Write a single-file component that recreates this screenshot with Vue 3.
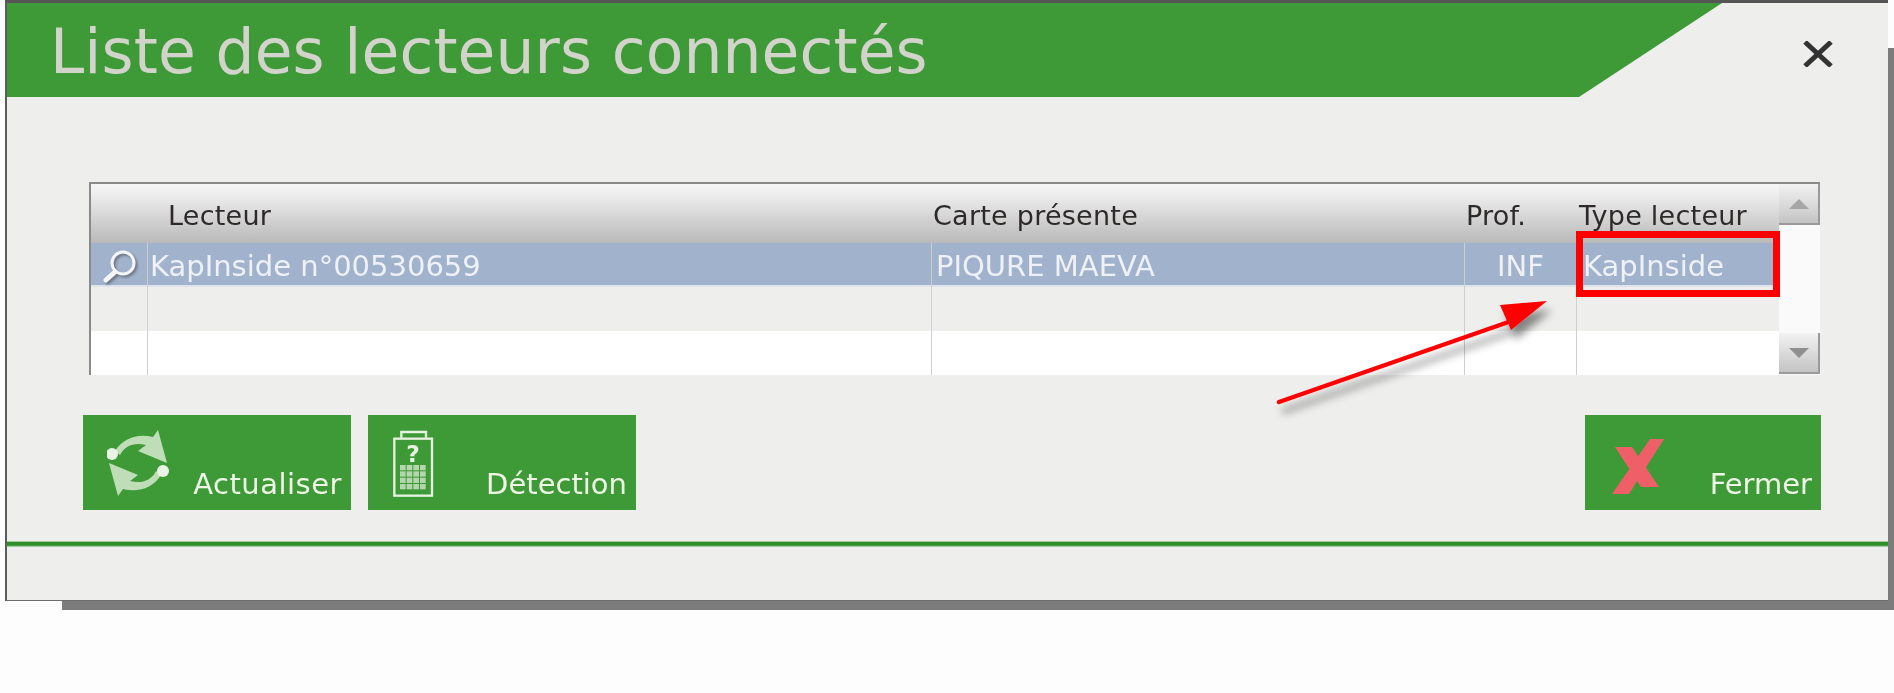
<script setup>
const columns = ['', 'Lecteur', 'Carte présente', 'Prof.', 'Type lecteur']
const rows = [
  { lecteur: 'KapInside n°00530659', carte: 'PIQURE MAEVA', prof: 'INF', type: 'KapInside', selected: true },
  { lecteur: '', carte: '', prof: '', type: '' },
  { lecteur: '', carte: '', prof: '', type: '', white: true }
]
const keypad = []
for (let r = 0; r < 4; r++) {
  for (let c = 0; c < 4; c++) keypad.push({ x: 148 + c * 20, y: 190 + r * 19 })
}
</script>

<template>
  <div class="page">
    <div class="shadow"></div>
    <div class="window">
      <div class="top">
        <div class="titlebar">
          <h1>Liste des lecteurs connectés</h1>
        </div>
        <svg class="close" width="32" height="26" viewBox="0 0 32 26">
          <path d="M3 1 L29 25 M29 1 L3 25" stroke="#333" stroke-width="5" fill="none" />
        </svg>
      </div>

      <div class="body">
        <div class="table">
          <div class="grid">
            <div class="head">
              <div v-for="col in columns" :key="col" class="hcell">{{ col }}</div>
            </div>
            <div v-for="(row, i) in rows" :key="i" class="row" :class="{ selected: row.selected, white: row.white }">
              <div class="cell">
                <svg v-if="row.selected" class="loupe" width="40" height="34" viewBox="0 0 40 34">
                  <circle cx="22" cy="14" r="11" fill="none" stroke="#f4f6fa" stroke-width="3" />
                  <path d="M14 23 L5 31" stroke="#f4f6fa" stroke-width="5" stroke-linecap="round" />
                </svg>
              </div>
              <div class="cell">{{ row.lecteur }}</div>
              <div class="cell">{{ row.carte }}</div>
              <div class="cell">{{ row.prof }}</div>
              <div class="cell">{{ row.type }}</div>
            </div>
          </div>
          <div class="scrollbar">
            <div class="sbtn up"><span></span></div>
            <div class="sbtn down"><span></span></div>
          </div>
        </div>

        <div class="actions">
          <button class="btn wide">
            <svg width="66" height="68" viewBox="107 429 66 68">
              <g fill="#bfdeb8">
                <path d="M115 450 C123 437 138 432 153 436 L158 429 L167 462 L138 450 L146 444 C135 441 125 444 120 454 Z" />
                <path d="M115 450 C123 437 138 432 153 436 L158 429 L167 462 L138 450 L146 444 C135 441 125 444 120 454 Z" transform="rotate(180 138 462)" />
              </g>
              <circle cx="112" cy="453" r="6" fill="#eaf4e6" />
              <circle cx="163" cy="470" r="6" fill="#eaf4e6" />
            </svg>
            <span class="spaced">Actualiser</span>
          </button>
          <button class="btn wide">
            <svg width="66" height="68" viewBox="124 85 198 204">
              <rect x="131" y="111" width="113" height="171" fill="none" stroke="#e6f2e2" stroke-width="7" />
              <path d="M152 108 V91 H226 V108" fill="none" stroke="#e6f2e2" stroke-width="7" />
              <text x="187" y="182" text-anchor="middle" class="qmark">?</text>
              <rect v-for="(k, i) in keypad" :key="i" :x="k.x" :y="k.y" width="17" height="16" fill="#b4d6ac" />
            </svg>
            <span>Détection</span>
          </button>
          <button class="btn fermer">
            <svg width="66" height="68" viewBox="1609 429 66 68">
              <polygon fill="#ef5f68" points="1650,438 1664,438 1629,493 1612,493" />
              <polygon fill="#ef5f68" points="1615,446 1632,446 1659,486 1641,486" />
            </svg>
            <span>Fermer</span>
          </button>
        </div>
      </div>

      <div class="line"></div>
      <div class="footer"></div>
    </div>

    <!-- annotations ajoutées sur la capture -->
    <div class="redbox"></div>
    <svg class="arrow" width="1894" height="693" viewBox="0 0 1894 693">
      <defs>
        <filter id="ds" x="-20%" y="-20%" width="150%" height="160%">
          <feDropShadow dx="5" dy="9" stdDeviation="4" flood-color="#000" flood-opacity="0.45" />
        </filter>
      </defs>
      <g filter="url(#ds)">
        <path d="M1279 402 L1520 318" stroke="#f00" stroke-width="4.5" stroke-linecap="round" />
        <polygon fill="#f00" points="1547,301 1500,305 1511,330" />
      </g>
    </svg>
  </div>
</template>

<style scoped>
.page {
  position: relative;
  width: 1894px;
  height: 693px;
  overflow: hidden;
  background: #fdfdfd;
  font-family: "DejaVu Sans", sans-serif;
}
.window {
  position: relative;
  box-sizing: border-box;
  margin-left: 5px;
  width: 1883px;
  height: 601px;
  background: #eeeeed;
  border-top: 3px solid #555;
  border-left: 2px solid #5c5c5c;
  border-bottom: 1px solid #6c6c6c;
  filter: blur(0.6px);
}
.shadow {
  position: absolute;
  left: 62px;
  right: 0;
  top: 48px;
  height: 562px;
  background: #7c7c7c;
}
.top {
  display: flex;
  justify-content: space-between;
  align-items: center;
  height: 94px;
  padding-right: 54px;
}
.titlebar {
  width: 1715px;
  height: 94px;
  background: #3e9a36;
  clip-path: polygon(0 0, 100% 0, 1572px 100%, 0 100%);
  display: flex;
  align-items: center;
  padding: 6px 0 0 43px;
  box-sizing: border-box;
}
h1 {
  margin: 0;
  font-size: 61.5px;
  font-weight: 400;
  letter-spacing: 0.1px;
  line-height: 1;
  color: #d2d3cb;
  white-space: nowrap;
}
.close {
  margin-top: 8px;
}
.body {
  padding: 85px 67px 0 76px;
}
.table {
  display: flex;
  width: 1731px;
  margin-left: 6px;
  height: 193px;
  border-top: 2px solid #8a8a8a;
  border-left: 2px solid #8a8a8a;
  box-sizing: border-box;
  background: #fafafa;
}
.grid {
  width: 1688px;
}
.head,
.row {
  display: grid;
  grid-template-columns: 57px 784px 533px 112px 202px;
}
.head {
  height: 59px;
  background: linear-gradient(#f6f6f6, #ececec 20%, #b9b9b9);
}
.hcell {
  font-size: 27px;
  letter-spacing: 0.25px;
  line-height: 64px;
  color: #2e2a2a;
  white-space: nowrap;
  padding-left: 20px;
}
.hcell:nth-child(3) {
  padding-left: 1px;
}
.hcell:nth-child(4) {
  padding-left: 1px;
}
.hcell:nth-child(5) {
  padding-left: 2px;
}
.row {
  height: 44px;
  background: #eeeeec;
}
.row.white {
  background: #fff;
  height: 44px;
}
.row.selected {
  height: 42px;
  background: #a1b2cc;
  border-bottom: 2px solid #dfe4ec;
  box-sizing: content-box;
}
.cell {
  position: relative;
  font-size: 29px;
  line-height: 46px;
  color: #eef1f6;
  white-space: nowrap;
  padding-left: 4px;
  border-right: 1px solid #cfcfcf;
  box-sizing: border-box;
}
.cell:nth-child(2) {
  padding-left: 2px;
}
.cell:last-child {
  border-right: none;
}
.cell:nth-child(4) {
  padding-left: 32px;
}
.selected .cell:last-child {
  padding-left: 6px;
}
.loupe {
  position: absolute;
  left: 10px;
  top: 6px;
  filter: drop-shadow(2px 2px 1px rgba(60, 60, 60, 0.5));
}
.scrollbar {
  flex: 1;
  display: flex;
  flex-direction: column;
  justify-content: space-between;
  padding-bottom: 1px;
}
.sbtn {
  width: 41px;
  height: 41px;
  background: linear-gradient(#f2f2f2, #c4c4c4);
  border-right: 2px solid #9a9a9a;
  border-bottom: 2px solid #9a9a9a;
  box-sizing: border-box;
  display: flex;
  align-items: center;
  justify-content: center;
}
.sbtn span {
  width: 0;
  height: 0;
  border-left: 10px solid transparent;
  border-right: 10px solid transparent;
}
.up span {
  border-bottom: 10px solid #a6a6a6;
}
.down span {
  border-top: 10px solid #8f8f8f;
}
.actions {
  display: flex;
  gap: 17px;
  margin-top: 40px;
}
.btn {
  display: flex;
  justify-content: space-between;
  align-items: flex-start;
  height: 95px;
  padding: 15px 9px 0 24px;
  box-sizing: border-box;
  background: #3e9a36;
  border: none;
  font-family: inherit;
  color: #eef5e6;
  font-size: 29px;
}
.btn span {
  line-height: 38px;
  margin-top: 35px;
}
.btn .spaced {
  letter-spacing: 0.5px;
}
.wide {
  width: 268px;
}
.fermer {
  width: 236px;
  margin-left: auto;
}
.qmark {
  font-family: "DejaVu Sans", sans-serif;
  font-weight: 700;
  font-size: 70px;
  fill: #e6f2e2;
}
.line {
  margin-top: 31px;
  height: 6px;
  background: linear-gradient(#d6e8d2, #2f8f2a 25%, #2f8f2a 70%, #cfe5cb);
}
.footer {
  height: 53px;
}
.redbox {
  position: absolute;
  left: 1576px;
  top: 231px;
  width: 204px;
  height: 66px;
  border: 7px solid #f00;
  box-sizing: border-box;
  filter: blur(0.5px);
}
.arrow {
  position: absolute;
  left: 0;
  top: 0;
  pointer-events: none;
}
</style>
